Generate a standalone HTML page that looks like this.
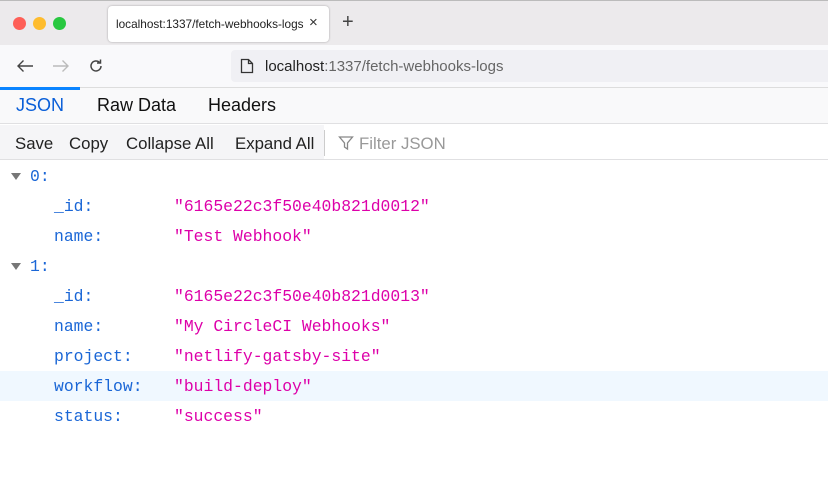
<!DOCTYPE html>
<html><head><style>
*{margin:0;padding:0;box-sizing:border-box}
body{width:828px;height:504px;background:#fff;font-family:"Liberation Sans",sans-serif;position:relative;overflow:hidden}
.a{position:absolute}
.mono{font-family:"Liberation Mono",monospace;font-size:16.4px;white-space:pre}
.k{color:#1a66d6}.s{color:#dd00a9}
</style></head><body>
<div class="a" style="left:0;top:0;width:828px;height:45px;background:#eceaec;border-top:1px solid #bbb"></div>
<div class="a" style="left:13px;top:17px;width:13px;height:13px;border-radius:50%;background:#fe5f57"></div>
<div class="a" style="left:33px;top:17px;width:13px;height:13px;border-radius:50%;background:#febc2e"></div>
<div class="a" style="left:53px;top:17px;width:13px;height:13px;border-radius:50%;background:#28c840"></div>
<div class="a" style="left:108px;top:6px;width:221px;height:36px;background:#fff;border-radius:4px;box-shadow:0 0 2px rgba(0,0,0,.3)"></div>
<div class="a" style="left:116px;top:17px;font-size:11.8px;color:#222">localhost:1337/fetch-webhooks-logs</div>
<div class="a" style="left:309px;top:14px;font-size:15px;color:#333">×</div>
<div class="a" style="left:342px;top:11px;font-size:20px;color:#444">+</div>
<div class="a" style="left:0;top:45px;width:828px;height:43px;background:#f9f9fb;border-bottom:1px solid #ddd"></div>
<svg class="a" style="left:16px;top:59px" width="18" height="14" viewBox="0 0 18 14"><path d="M17 7H2M7.5 1.5L2 7l5.5 5.5" fill="none" stroke="#444" stroke-width="1.4"/></svg>
<svg class="a" style="left:52px;top:59px" width="18" height="14" viewBox="0 0 18 14"><path d="M1 7h15M10.5 1.5L16 7l-5.5 5.5" fill="none" stroke="#bbb" stroke-width="1.4"/></svg>
<svg class="a" style="left:88px;top:58px" width="16" height="16" viewBox="0 0 16 16"><path d="M13 8a5 5 0 1 1-1.5-3.6" fill="none" stroke="#444" stroke-width="1.5"/><path d="M12.5 1.5v3.5h-3.5" fill="none" stroke="#444" stroke-width="1.5"/></svg>
<div class="a" style="left:231px;top:50px;width:597px;height:32px;background:#f0f0f4;border-radius:4px 0 0 4px"></div>
<svg class="a" style="left:240px;top:58px" width="14" height="16" viewBox="0 0 14 16"><path d="M1.5 1.5h7l4 4v9h-11z M8.5 1.5v4h4" fill="none" stroke="#333" stroke-width="1.3"/></svg>
<div class="a" style="left:265px;top:58px;font-size:15px;color:#222">localhost<span style="color:#666">:1337/fetch-webhooks-logs</span></div>
<div class="a" style="left:0;top:88px;width:828px;height:36px;background:#f9f9fa;border-bottom:1px solid #e0e0e2"></div>
<div class="a" style="left:0;top:87px;width:80px;height:3px;background:#0a84ff"></div>
<div class="a" style="left:16px;top:95px;font-size:18px;color:#0a5fd8">JSON</div>
<div class="a" style="left:97px;top:95px;font-size:18px;color:#111">Raw Data</div>
<div class="a" style="left:208px;top:95px;font-size:18px;color:#111">Headers</div>
<div class="a" style="left:0;top:125px;width:324px;height:35px;background:#f5f5f7;border-bottom:1px solid #e0e0e2"></div>
<div class="a" style="left:324px;top:130px;width:1px;height:26px;background:#ccc"></div>
<div class="a" style="left:0;top:159px;width:828px;height:1px;background:#e0e0e2"></div>
<div class="a" style="left:15px;top:134px;font-size:16.8px;color:#222">Save</div>
<div class="a" style="left:69px;top:134px;font-size:16.8px;color:#222">Copy</div>
<div class="a" style="left:126px;top:134px;font-size:16.8px;color:#222">Collapse All</div>
<div class="a" style="left:235px;top:134px;font-size:16.8px;color:#222">Expand All</div>
<svg class="a" style="left:338px;top:135px" width="16" height="16" viewBox="0 0 16 16"><path d="M1.5 2h13l-5 6v6l-3-2v-4z" fill="none" stroke="#888" stroke-width="1.3"/></svg>
<div class="a" style="left:359px;top:134px;font-size:16.8px;color:#999">Filter JSON</div>
<div class="a" style="left:0;top:371px;width:828px;height:30px;background:#f0f8ff"></div>
<div class="a" style="left:11px;top:173px;width:0;height:0;border-left:5px solid transparent;border-right:5px solid transparent;border-top:7px solid #777"></div>
<div class="a" style="left:11px;top:263px;width:0;height:0;border-left:5px solid transparent;border-right:5px solid transparent;border-top:7px solid #777"></div>
<div class="a mono k" style="left:30px;top:167px">0:</div>
<div class="a mono k" style="left:54px;top:197px">_id:</div><div class="a mono s" style="left:174px;top:197px">"6165e22c3f50e40b821d0012"</div>
<div class="a mono k" style="left:54px;top:227px">name:</div><div class="a mono s" style="left:174px;top:227px">"Test Webhook"</div>
<div class="a mono k" style="left:30px;top:257px">1:</div>
<div class="a mono k" style="left:54px;top:287px">_id:</div><div class="a mono s" style="left:174px;top:287px">"6165e22c3f50e40b821d0013"</div>
<div class="a mono k" style="left:54px;top:317px">name:</div><div class="a mono s" style="left:174px;top:317px">"My CircleCI Webhooks"</div>
<div class="a mono k" style="left:54px;top:347px">project:</div><div class="a mono s" style="left:174px;top:347px">"netlify-gatsby-site"</div>
<div class="a mono k" style="left:54px;top:377px">workflow:</div><div class="a mono s" style="left:174px;top:377px">"build-deploy"</div>
<div class="a mono k" style="left:54px;top:407px">status:</div><div class="a mono s" style="left:174px;top:407px">"success"</div>
</body></html>
